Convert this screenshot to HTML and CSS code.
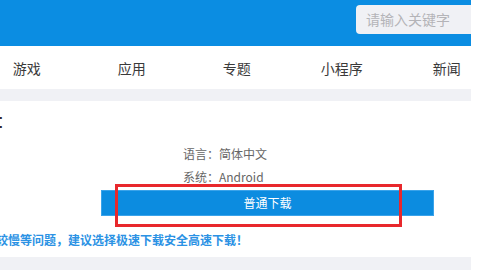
FILE: index.html
```html
<!DOCTYPE html>
<html lang="zh-CN">

<head>
    <meta charset="UTF-8">
    <meta name="viewport" content="width=device-width, initial-scale=1.0">
    <title>下载</title>
    <link rel="stylesheet" href="styles.css">
</head>

<body>
    <div class="page">
        <div class="header">
            <div class="search">请输入关键字</div>
        </div>

        <div class="nav">
            <div class="nav-item">游戏</div>
            <div class="nav-item">应用</div>
            <div class="nav-item">专题</div>
            <div class="nav-item">小程序</div>
            <div class="nav-item">新闻</div>
        </div>

        <div class="divider"></div>

        <div class="content">
            <div class="title">:</div>
            <div class="info">
                <div class="info-line">语言：简体中文</div>
                <div class="info-line">系统：Android</div>
            </div>
            <div class="download-wrap">
                <div class="download-btn">普通下载</div>
                <div class="highlight"></div>
            </div>
            <div class="notice">较慢等问题，建议选择极速下载安全高速下载！</div>
        </div>

        <div class="divider bottom"></div>
    </div>
</body>

</html>
```

FILE: styles.css
```css
body {
    margin: 0;
    background-color: #fff;
    font-family: "Noto Sans CJK SC", "Noto Sans", Arial, sans-serif;
    overflow: hidden;
}

.page {
    width: 471px;
}

/* шапка */
.header {
    height: 46px;
    background-color: #0b8de2;
    display: flex;
    justify-content: flex-end;
    align-items: flex-start;
}

.search {
    margin-top: 5px;
    width: 105px;
    height: 29px;
    padding-left: 10px;
    background-color: #f0f1f5;
    border-radius: 4px 0 0 4px;
    color: #b4b4b8;
    font-size: 14px;
    line-height: 29px;
}

.nav {
    height: 43px;
    display: flex;
    align-items: center;
    gap: 56.5px;
    padding-left: 2.5px;
}

.nav-item {
    width: 50px;
    text-align: center;
    font-size: 14px;
    color: #3a3a3a;
    white-space: nowrap;
}

.divider {
    height: 12px;
    background-color: #f0f1f5;
}

.divider.bottom {
    height: 13px;
}

.content {
    height: 156px;
    display: flex;
    flex-direction: column;
}

.title {
    height: 41px;
    margin-left: -2px;
    padding-top: 9px;
    box-sizing: border-box;
    font-size: 20px;
    line-height: 22px;
    color: #222;
    font-family: "Liberation Sans", sans-serif;
}

.info {
    padding-left: 183px;
}

.info-line {
    font-size: 12px;
    line-height: 23px;
    color: #666;
}

.download-wrap {
    position: relative;
    margin-top: 2px;
    margin-left: 101px;
    width: 333px;
}

.download-btn {
    height: 26px;
    background-color: #0c8ce0;
    border: 1px solid #3aa3ea;
    box-sizing: border-box;
    color: #fff;
    font-size: 12px;
    line-height: 24px;
    text-align: center;
}

/* красная рамка поверх кнопки */
.highlight {
    position: absolute;
    left: 14px;
    top: -6px;
    width: 287px;
    height: 43px;
    border: 3px solid #e8282c;
    box-sizing: border-box;
}

.notice {
    margin-top: 16px;
    margin-left: -4px;
    font-size: 12px;
    line-height: 16px;
    font-weight: bold;
    color: #2b92e4;
    white-space: nowrap;
}
```
